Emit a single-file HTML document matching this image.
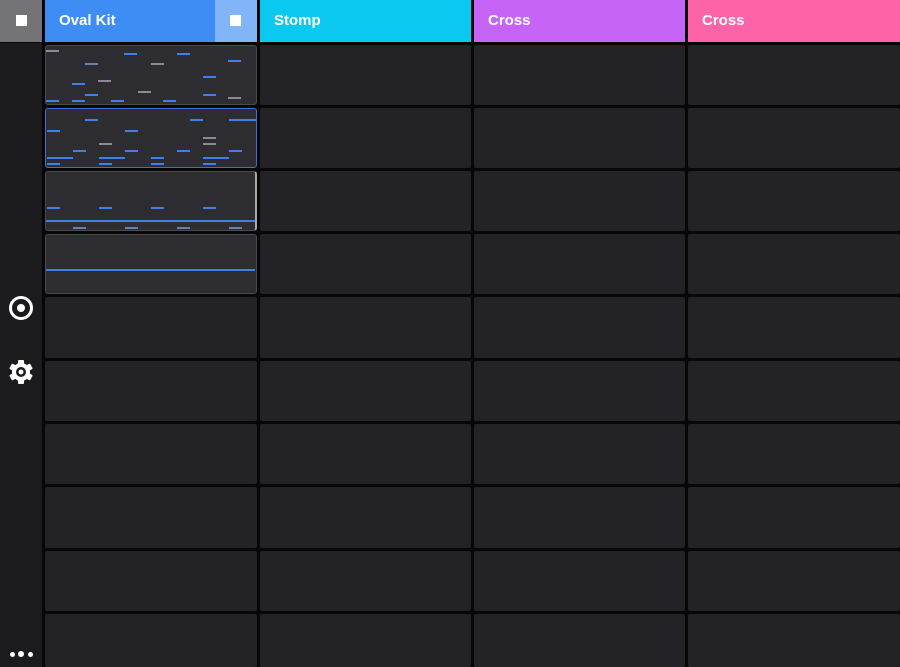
<!DOCTYPE html>
<html><head><meta charset="utf-8"><style>
*{margin:0;padding:0;box-sizing:border-box}
body{width:900px;height:667px;overflow:hidden;background:#070708;position:relative;font-family:"Liberation Sans",sans-serif}
.a{position:absolute}
.side{left:0;top:43px;width:42px;height:624px;background:#1b1b1e}
.h{top:0;height:42px;color:#fff;font-weight:bold;font-size:15px;line-height:41px;padding-left:14px}
.c{position:absolute;background:#232327;border-radius:2px}
.clip{position:absolute;background:#2d2d31;border:1px solid #4a4a4e;border-radius:3px;overflow:hidden}
.d{position:absolute;height:2px;width:13px;background:#3f7fe8}
.g{background:#8a8a90}
.sq{position:absolute;width:11px;height:11px;background:#fff}
</style></head><body>
<div class="a side"></div>
<div class="a" style="left:0;top:0;width:42px;height:42px;background:#747476"></div>
<div class="sq" style="left:16px;top:15px"></div>
<div class="a h" style="left:45px;width:212px;background:#3e8df5">Oval Kit</div>
<div class="a" style="left:215px;top:0;width:42px;height:42px;background:#82b4f8"></div>
<div class="sq" style="left:230px;top:15px"></div>
<div class="a h" style="left:260px;width:211px;background:#0bc8f1">Stomp</div>
<div class="a h" style="left:474px;width:211px;background:#c664f8">Cross</div>
<div class="a h" style="left:688px;width:212px;background:#fd64a8">Cross</div>

<div id="grid"></div>
<!-- cells -->
<div class="c" style="left:260px;top:45px;width:211px;height:60px"></div><div class="c" style="left:474px;top:45px;width:211px;height:60px"></div><div class="c" style="left:688px;top:45px;width:212px;height:60px"></div>
<div class="c" style="left:260px;top:108px;width:211px;height:60px"></div><div class="c" style="left:474px;top:108px;width:211px;height:60px"></div><div class="c" style="left:688px;top:108px;width:212px;height:60px"></div>
<div class="c" style="left:260px;top:171px;width:211px;height:60px"></div><div class="c" style="left:474px;top:171px;width:211px;height:60px"></div><div class="c" style="left:688px;top:171px;width:212px;height:60px"></div>
<div class="c" style="left:260px;top:234px;width:211px;height:60px"></div><div class="c" style="left:474px;top:234px;width:211px;height:60px"></div><div class="c" style="left:688px;top:234px;width:212px;height:60px"></div>
<div class="c" style="left:45px;top:297px;width:212px;height:61px"></div><div class="c" style="left:260px;top:297px;width:211px;height:61px"></div><div class="c" style="left:474px;top:297px;width:211px;height:61px"></div><div class="c" style="left:688px;top:297px;width:212px;height:61px"></div>
<div class="c" style="left:45px;top:361px;width:212px;height:60px"></div><div class="c" style="left:260px;top:361px;width:211px;height:60px"></div><div class="c" style="left:474px;top:361px;width:211px;height:60px"></div><div class="c" style="left:688px;top:361px;width:212px;height:60px"></div>
<div class="c" style="left:45px;top:424px;width:212px;height:60px"></div><div class="c" style="left:260px;top:424px;width:211px;height:60px"></div><div class="c" style="left:474px;top:424px;width:211px;height:60px"></div><div class="c" style="left:688px;top:424px;width:212px;height:60px"></div>
<div class="c" style="left:45px;top:487px;width:212px;height:61px"></div><div class="c" style="left:260px;top:487px;width:211px;height:61px"></div><div class="c" style="left:474px;top:487px;width:211px;height:61px"></div><div class="c" style="left:688px;top:487px;width:212px;height:61px"></div>
<div class="c" style="left:45px;top:551px;width:212px;height:60px"></div><div class="c" style="left:260px;top:551px;width:211px;height:60px"></div><div class="c" style="left:474px;top:551px;width:211px;height:60px"></div><div class="c" style="left:688px;top:551px;width:212px;height:60px"></div>
<div class="c" style="left:45px;top:614px;width:212px;height:53px"></div><div class="c" style="left:260px;top:614px;width:211px;height:53px"></div><div class="c" style="left:474px;top:614px;width:211px;height:53px"></div><div class="c" style="left:688px;top:614px;width:212px;height:53px"></div>

<!-- clips -->
<div class="clip" style="left:45px;top:45px;width:212px;height:60px"></div>
<div class="clip" style="left:45px;top:108px;width:212px;height:60px;border-color:#3f6ed8"></div>
<div class="clip" style="left:45px;top:171px;width:212px;height:60px;border-right:2px solid #aaa"></div>
<div class="clip" style="left:45px;top:234px;width:212px;height:60px"></div>

<!-- clip1 -->
<div class="d g" style="left:46px;top:50px"></div><div class="d" style="left:124px;top:53px"></div><div class="d" style="left:177px;top:53px"></div>
<div class="d" style="left:85px;top:63px;background:#6680b0"></div><div class="d g" style="left:151px;top:63px"></div><div class="d" style="left:228px;top:60px"></div>
<div class="d" style="left:203px;top:76px"></div><div class="d" style="left:72px;top:83px"></div><div class="d g" style="left:98px;top:80px"></div>
<div class="d g" style="left:138px;top:91px"></div><div class="d" style="left:85px;top:94px"></div><div class="d" style="left:203px;top:94px"></div>
<div class="d g" style="left:228px;top:97px"></div><div class="d" style="left:46px;top:100px"></div><div class="d" style="left:72px;top:100px"></div>
<div class="d" style="left:111px;top:100px"></div><div class="d" style="left:163px;top:100px"></div>
<!-- clip2 -->
<div class="d" style="left:85px;top:119px"></div><div class="d" style="left:190px;top:119px"></div><div class="d" style="left:229px;top:119px;width:27px"></div>
<div class="d" style="left:47px;top:130px"></div><div class="d" style="left:125px;top:130px"></div><div class="d g" style="left:203px;top:137px"></div>
<div class="d g" style="left:99px;top:143px"></div><div class="d g" style="left:203px;top:143px"></div>
<div class="d" style="left:73px;top:150px"></div><div class="d" style="left:125px;top:150px"></div><div class="d" style="left:177px;top:150px"></div><div class="d" style="left:229px;top:150px"></div>
<div class="d" style="left:47px;top:157px;width:26px"></div><div class="d" style="left:99px;top:157px;width:26px"></div><div class="d" style="left:151px;top:157px"></div><div class="d" style="left:203px;top:157px;width:26px"></div>
<div class="d" style="left:47px;top:163px"></div><div class="d" style="left:99px;top:163px"></div><div class="d" style="left:151px;top:163px"></div><div class="d" style="left:203px;top:163px"></div>
<!-- clip3 -->
<div class="d" style="left:47px;top:207px"></div><div class="d" style="left:99px;top:207px"></div><div class="d" style="left:151px;top:207px"></div><div class="d" style="left:203px;top:207px"></div>
<div class="d" style="left:46px;top:220px;width:209px"></div>
<div class="d g" style="left:73px;top:227px;background:#6680b0"></div><div class="d" style="left:125px;top:227px;background:#6680b0"></div><div class="d" style="left:177px;top:227px;background:#6680b0"></div><div class="d" style="left:229px;top:227px;background:#6680b0"></div>
<!-- clip4 -->
<div class="d" style="left:46px;top:269px;width:209px"></div>

<!-- icons -->
<svg class="a" style="left:7px;top:294px" width="28" height="28" viewBox="0 0 28 28"><circle cx="14" cy="14" r="10.5" fill="none" stroke="#fff" stroke-width="3"/><circle cx="14" cy="14" r="4" fill="#fff"/></svg>
<svg class="a" style="left:7px;top:358px" width="28" height="28" viewBox="0 0 28 28">
<g fill="#fff"><circle cx="14" cy="14" r="9"/>
<rect x="11" y="2" width="6" height="6" rx="1"/><rect x="11" y="20" width="6" height="6" rx="1"/>
<rect x="11" y="2" width="6" height="6" rx="1" transform="rotate(60 14 14)"/><rect x="11" y="20" width="6" height="6" rx="1" transform="rotate(60 14 14)"/>
<rect x="11" y="2" width="6" height="6" rx="1" transform="rotate(120 14 14)"/><rect x="11" y="20" width="6" height="6" rx="1" transform="rotate(120 14 14)"/></g>
<circle cx="14" cy="14" r="5" fill="#1b1b1e"/><circle cx="14" cy="14" r="2.5" fill="#fff"/></svg>
<div class="a" style="left:10px;top:652px;width:5px;height:5px;border-radius:50%;background:#fff"></div>
<div class="a" style="left:18px;top:651px;width:6px;height:6px;border-radius:50%;background:#fff"></div>
<div class="a" style="left:28px;top:652px;width:5px;height:5px;border-radius:50%;background:#fff"></div>
</body></html>
